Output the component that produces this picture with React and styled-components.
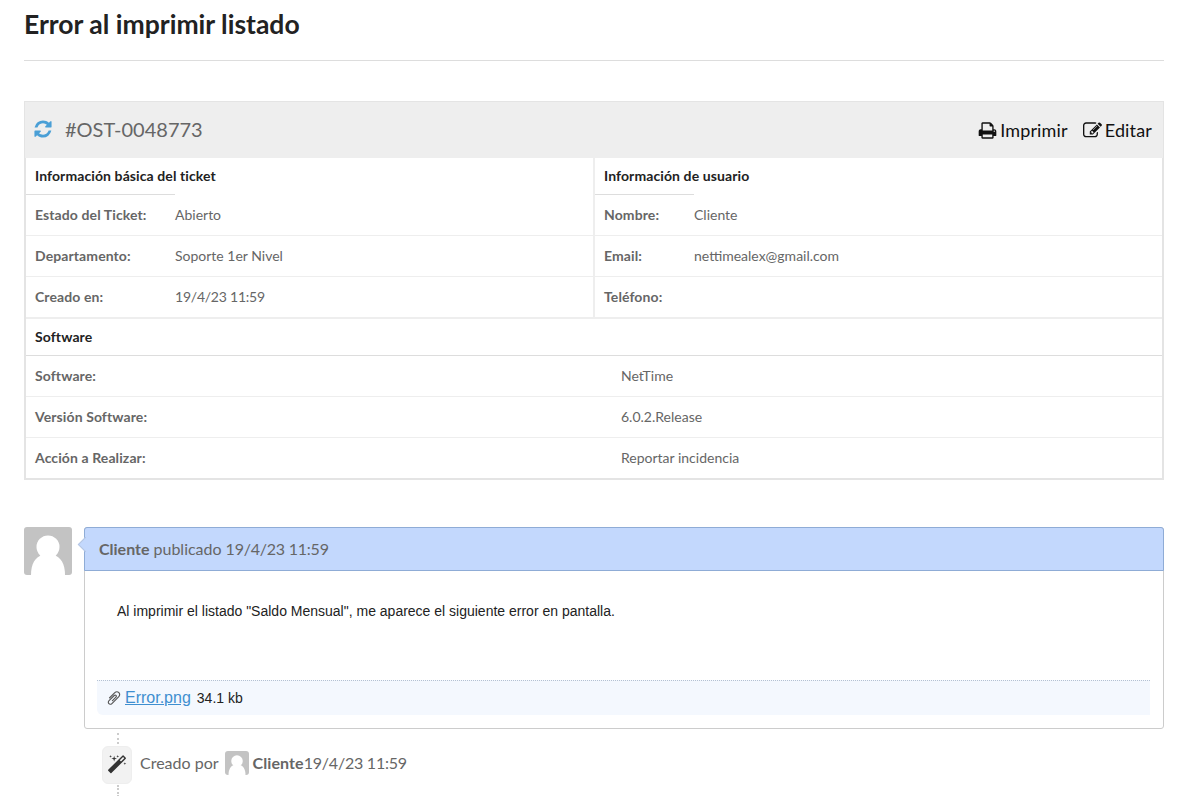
import React from "react";
import styled, { createGlobalStyle } from "styled-components";

const Global = createGlobalStyle`
  html, body { margin: 0; padding: 0; background: #fff; }
  body { font-family: Lato, "Open Sans", sans-serif; color: #58595b; overflow: hidden; height: 796px; }
  * { box-sizing: border-box; }
`;

const Page = styled.div`
  padding: 0 27px 0 24px;
  height: 796px;
  overflow: hidden;
`;
const Title = styled.h1`
  margin: 0;
  height: 61px;
  padding-top: 8px;
  font-size: 26.5px;
  line-height: 32px;
  font-weight: 700;
  color: #222;
  border-bottom: 1px solid #ddd;
`;
const Panel = styled.section`
  margin-top: 40px;
  border: 2px solid #e4e4e4;
  border-top-width: 1px;
`;
const PanelHead = styled.header`
  height: 56px;
  background: #eee;
  margin: 0 -1px;
  padding: 0 11px 2px 8px;
  display: flex;
  align-items: center;
  justify-content: space-between;
`;
const Ticket = styled.div`
  display: flex;
  align-items: center;
  gap: 12px;
  font-size: 20px;
  color: #666;
  svg { color: #4a9fd6; width: 20px; height: 20px; }
`;
const Actions = styled.div`
  display: flex;
  gap: 15px;
  margin-top: 2px;
`;
const Action = styled.span`
  display: inline-flex;
  align-items: center;
  gap: 3px;
  font-size: 18px;
  letter-spacing: 0.15px;
  color: #111;
  svg { width: 19px; height: 19px; }
`;
const TwoCols = styled.div`
  display: grid;
  grid-template-columns: 567px 1fr;
  border-bottom: 2px solid #eee;
`;
const Col = styled.div`
  border-left: ${p => (p.$divided ? "2px solid #eee" : "0")};
`;
const SectionHead = styled.div`
  height: 37px;
  padding: 9px 0 0 9px;
  width: ${p => p.$w};
  font-size: 14px;
  line-height: 17px;
  font-weight: 700;
  letter-spacing: 0.1px;
  white-space: nowrap;
  color: #222;
  border-bottom: 1px solid #ddd;
`;
const Row = styled.div`
  height: ${p => (p.$last ? "40px" : "41px")};
  display: grid;
  grid-template-columns: ${p => p.$label}px 1fr;
  align-items: center;
  padding: 0 0 ${p => (p.$last ? "1px" : "2px")} 9px;
  font-size: 14px;
  border-bottom: ${p => (p.$last ? "0" : "1px solid #eee")};
`;
const Label = styled.span`
  font-weight: 700;
  letter-spacing: 0.1px;
  color: #666;
`;
const Value = styled.span`
  color: #666;
`;
const DateText = styled.span`
  letter-spacing: -0.23px;
`;
const Comment = styled.div`
  margin-top: 47px;
  display: flex;
  gap: 12px;
`;
const Avatar = styled.div`
  width: 48px;
  height: 48px;
  flex: none;
  border-radius: 3px;
  overflow: hidden;
  svg { display: block; width: 100%; height: 100%; }
`;
const Bubble = styled.article`
  position: relative;
  flex: 1;
  height: 202px;
  border: 1px solid #ccc;
  border-radius: 3px;
`;
const BubbleHead = styled.header`
  position: relative;
  height: 44px;
  margin: -1px -1px 0;
  padding: 0 14px 2px;
  display: flex;
  align-items: center;
  gap: 4px;
  font-size: 16px;
  color: #666;
  background: #c3d8fd;
  border: 1px solid #8facd6;
  border-radius: 3px 3px 0 0;
  b { font-weight: 700; }
  &::before {
    content: "";
    position: absolute;
    left: -5px;
    top: 11px;
    width: 10px;
    height: 10px;
    background: #c3d8fd;
    border-left: 1px solid #b5c6e2;
    border-bottom: 1px solid #b5c6e2;
    transform: rotate(45deg);
  }
`;
const Body = styled.p`
  margin: 0;
  height: 109px;
  padding: 32px 32px 0;
  font-family: "Liberation Sans", Arial, sans-serif;
  font-size: 14px;
  line-height: 16px;
  color: #222;
`;
const Attachment = styled.div`
  margin: 0 13px 0 12px;
  height: 35px;
  padding: 0 9px;
  display: flex;
  align-items: center;
  font-family: "Liberation Sans", Arial, sans-serif;
  background: #f4f8fe;
  border-top: 1px dotted #b4c1d2;
  border-radius: 0 0 0 6px;
  svg { width: 16px; height: 16px; color: #555; margin-right: 3px; flex: none; transform: scaleX(-1); }
`;
const FileLink = styled.a`
  font-size: 16px;
  color: #3f8fd0;
  text-decoration: underline;
  margin-right: 6px;
`;
const FileSize = styled.span`
  font-size: 14px;
  color: #222;
`;
const Event = styled.div`
  position: relative;
  margin: 17px 0 0 78px;
  display: flex;
  align-items: center;
  font-size: 16px;
  color: #666;
  &::before, &::after {
    content: "";
    position: absolute;
    left: 15px;
    border-left: 2px dotted #ccc;
  }
  &::before { top: -13px; height: 11px; }
  &::after { top: 39px; height: 12px; }
`;
const EventIcon = styled.div`
  width: 30px;
  height: 38px;
  border-radius: 6px;
  border: 1px solid #eee;
  background: #f2f2f2;
  display: flex;
  align-items: center;
  justify-content: center;
  margin-right: 8px;
  svg { width: 20px; height: 20px; color: #333; }
`;
const EventLine = styled.div`
  display: flex;
  align-items: center;
  margin-bottom: 5px;
`;
const SmallAvatar = styled(Avatar)`
  width: 24px;
  height: 24px;
  margin: 0 4px 0 6px;
`;

const Person = () => (
  <svg viewBox="0 0 48 48">
    <rect width="48" height="48" fill="#c3c3c3" />
    <circle cx="24" cy="20" r="11.5" fill="#fff" />
    <path d="M7 48c0-11 4-18 12-20.500h10c8 2.500 12 9.500 12 20.500z" fill="#fff" />
  </svg>
);

const paths = {
  refresh:
    "M1639 1056q0 5-1 7-64 268-268 434.500t-478 166.500q-146 0-282.500-55t-243.500-157l-129 129q-19 19-45 19t-45-19-19-45v-448q0-26 19-45t45-19h448q26 0 45 19t19 45-19 45l-137 137q71 66 161 102t187 36q134 0 250-65t186-179q11-17 53-117 8-23 30-23h192q13 0 22.500 9.500t9.500 22.500zm25-800v448q0 26-19 45t-45 19h-448q-26 0-45-19t-19-45 19-45l138-138q-148-137-349-137-134 0-250 65t-186 179q-11 17-53 117-8 23-30 23h-199q-13 0-22.500-9.500t-9.500-22.500v-7q65-268 270-434.500t480-166.500q146 0 284 55.500t245 156.500l130-129q19-19 45-19t45 19 19 45z",
  print:
    "M448 1536h896v-256h-896v256zm0-640h896v-384h-160q-40 0-68-28t-28-68v-160h-640v640zm1152 64q0-26-19-45t-45-19-45 19-19 45 19 45 45 19 45-19 19-45zm128 0v416q0 13-9.500 22.500t-22.500 9.500h-224v160q0 40-28 68t-68 28h-960q-40 0-68-28t-28-68v-160h-224q-13 0-22.500-9.500t-9.500-22.500v-416q0-79 56.500-135.500t135.500-56.500h64v-544q0-40 28-68t68-28h672q40 0 88 20t76 48l152 152q28 28 48 76t20 88v256h64q79 0 135.500 56.500t56.500 135.500z",
  edit:
    "M888 1184l116-116-152-152-116 116v56h96v96h56zm440-720q-16-16-33 1l-350 350q-17 17-1 33t33-1l350-350q17-17 1-33zm80 594v190q0 119-84.500 203.500t-203.500 84.500h-832q-119 0-203.500-84.500t-84.500-203.500v-832q0-119 84.500-203.500t203.500-84.500h832q63 0 117 25 15 7 18 23 3 17-9 29l-49 49q-14 14-32 8-23-6-45-6h-832q-66 0-113 47t-47 113v832q0 66 47 113t113 47h832q66 0 113-47t47-113v-126q0-13 9-22l64-64q15-15 35-7t20 29zm-96-738l288 288-672 672h-288v-288zm444 132l-92 92-288-288 92-92q28-28 68-28t68 28l152 152q28 28 28 68t-28 68z",
  clip:
    "M1596 1385q0 117-79 196t-196 79q-135 0-235-100l-777-776q-113-115-113-271 0-159 110-270t269-111q158 0 273 113l605 606q10 10 10 22 0 16-30.500 46.500t-46.500 30.500q-13 0-23-10l-606-607q-79-77-181-77-106 0-179 75t-73 181q0 105 76 181l776 777q63 63 145 63 64 0 106-42t42-106q0-82-63-145l-581-581q-26-24-60-24-29 0-48 19t-19 48q0 32 25 59l410 410q10 10 10 22 0 16-31 47t-47 31q-12 0-22-10l-410-410q-63-61-63-149 0-82 57-139t139-57q88 0 149 63l581 581q100 98 100 235z",
  magic:
    "M1254 581l293-293-107-107-293 293zm447-293q0 27-18 45l-1286 1286q-18 18-45 18t-45-18l-198-198q-18-18-18-45t18-45l1286-1286q18-18 45-18t45 18l198 198q18 18 18 45zm-1351-190l98 30-98 30-30 98-30-98-98-30 98-30 30-98zm350 162l196 60-196 60-60 196-60-196-196-60 196-60 60-196zm930 478l98 30-98 30-30 98-30-98-98-30 98-30 30-98zm-640-640l98 30-98 30-30 98-30-98-98-30 98-30 30-98z",
};
const Icon = ({ name }) => (
  <svg viewBox="0 0 1792 1792" fill="currentColor" aria-hidden="true">
    <path d={paths[name]} />
  </svg>
);

export default function App() {
  return (
    <Page>
      <Global />
      <Title>Error al imprimir listado</Title>
      <Panel>
        <PanelHead>
          <Ticket><Icon name="refresh" />#OST-0048773</Ticket>
          <Actions>
            <Action><Icon name="print" />Imprimir</Action>
            <Action><Icon name="edit" />Editar</Action>
          </Actions>
        </PanelHead>
        <TwoCols>
          <Col>
            <SectionHead $w="149px">Información básica del ticket</SectionHead>
            <Row $label={140}><Label>Estado del Ticket:</Label><Value>Abierto</Value></Row>
            <Row $label={140}><Label>Departamento:</Label><Value>Soporte 1er Nivel</Value></Row>
            <Row $label={140} $last><Label>Creado en:</Label><Value><DateText>19/4/23 11:59</DateText></Value></Row>
          </Col>
          <Col $divided>
            <SectionHead $w="99px">Información de usuario</SectionHead>
            <Row $label={90}><Label>Nombre:</Label><Value>Cliente</Value></Row>
            <Row $label={90}><Label>Email:</Label><Value>nettimealex@gmail.com</Value></Row>
            <Row $label={90} $last><Label>Teléfono:</Label><Value /></Row>
          </Col>
        </TwoCols>
        <SectionHead $w="100%">Software</SectionHead>
        <Row $label={586}><Label>Software:</Label><Value>NetTime</Value></Row>
        <Row $label={586}><Label>Versión Software:</Label><Value>6.0.2.Release</Value></Row>
        <Row $label={586} $last><Label>Acción a Realizar:</Label><Value>Reportar incidencia</Value></Row>
      </Panel>
      <Comment>
        <Avatar><Person /></Avatar>
        <Bubble>
          <BubbleHead><b>Cliente</b> publicado <DateText>19/4/23 11:59</DateText></BubbleHead>
          <Body>Al imprimir el listado "Saldo Mensual", me aparece el siguiente error en pantalla.</Body>
          <Attachment>
            <Icon name="clip" />
            <FileLink>Error.png</FileLink>
            <FileSize>34.1 kb</FileSize>
          </Attachment>
        </Bubble>
      </Comment>
      <Event>
        <EventIcon><Icon name="magic" /></EventIcon>
        <EventLine>
          Creado por
          <SmallAvatar><Person /></SmallAvatar>
          <Label>Cliente</Label><DateText>19/4/23 11:59</DateText>
        </EventLine>
      </Event>
    </Page>
  );
}
